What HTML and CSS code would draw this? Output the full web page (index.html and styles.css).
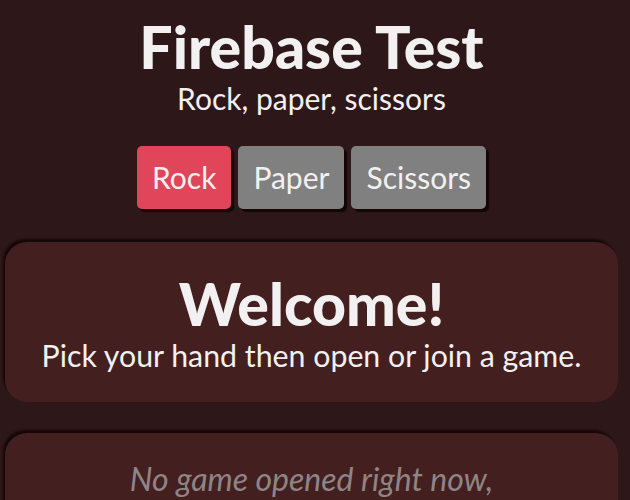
FILE: index.html
```html
<!DOCTYPE html>
<html>
<head>
<meta charset="utf-8">
<link rel="stylesheet" href="styles.css">
</head>
<body>
<div class="page">
  <header class="header">
    <h1 class="title">Firebase Test</h1>
    <p class="subtitle">Rock, paper, scissors</p>
  </header>
  <div class="hands">
    <button class="hand hand-active">Rock</button>
    <button class="hand">Paper</button>
    <button class="hand">Scissors</button>
  </div>
  <section class="card">
    <h2 class="card-title">Welcome!</h2>
    <p class="card-text">Pick your hand then open or join a game.</p>
  </section>
  <section class="card card-games">
    <p class="empty">No game opened right now,</p>
  </section>
</div>
</body>
</html>
```
FILE: styles.css
```css
html, body {
  margin: 0;
  padding: 0;
  background: #2e1718;
  font-family: "Lato", "Open Sans", sans-serif;
  color: #f2f0f0;
  overflow: hidden;
}
.page {
  padding: 0 12px 0 5px;
}
.header {
  text-align: center;
  padding-top: 13px;
}
.title {
  margin: 0;
  font-size: 59px;
  line-height: 67px;
  font-weight: 900;
}
.subtitle {
  margin: 0;
  font-size: 30px;
  line-height: 36px;
}
.hands {
  display: flex;
  justify-content: center;
  gap: 7px;
  margin-top: 30px;
}
.hand {
  font-family: inherit;
  font-size: 30px;
  line-height: 38px;
  color: #f2f0f0;
  background: #808080;
  border: none;
  border-radius: 5px;
  padding: 12px 15px 13px;
  box-shadow: 3px 3px 1px #120607;
}
.hand-active {
  background: #e0455a;
}
.card {
  margin-top: 33px;
  background: #431f20;
  border-radius: 22px;
  box-shadow: -2px -3px 2px #160808;
  text-align: center;
  padding: 30px 10px 28px;
}
.card-title {
  margin: 0;
  font-size: 59px;
  line-height: 64px;
  font-weight: 900;
}
.card-text {
  margin: 0;
  font-size: 30.3px;
  line-height: 38px;
}
.card-games {
  margin-top: 31px;
  padding-top: 26px;
}
.empty {
  margin: 0;
  font-style: italic;
  color: #8f8585;
  font-size: 32px;
  line-height: 40px;
}
```
